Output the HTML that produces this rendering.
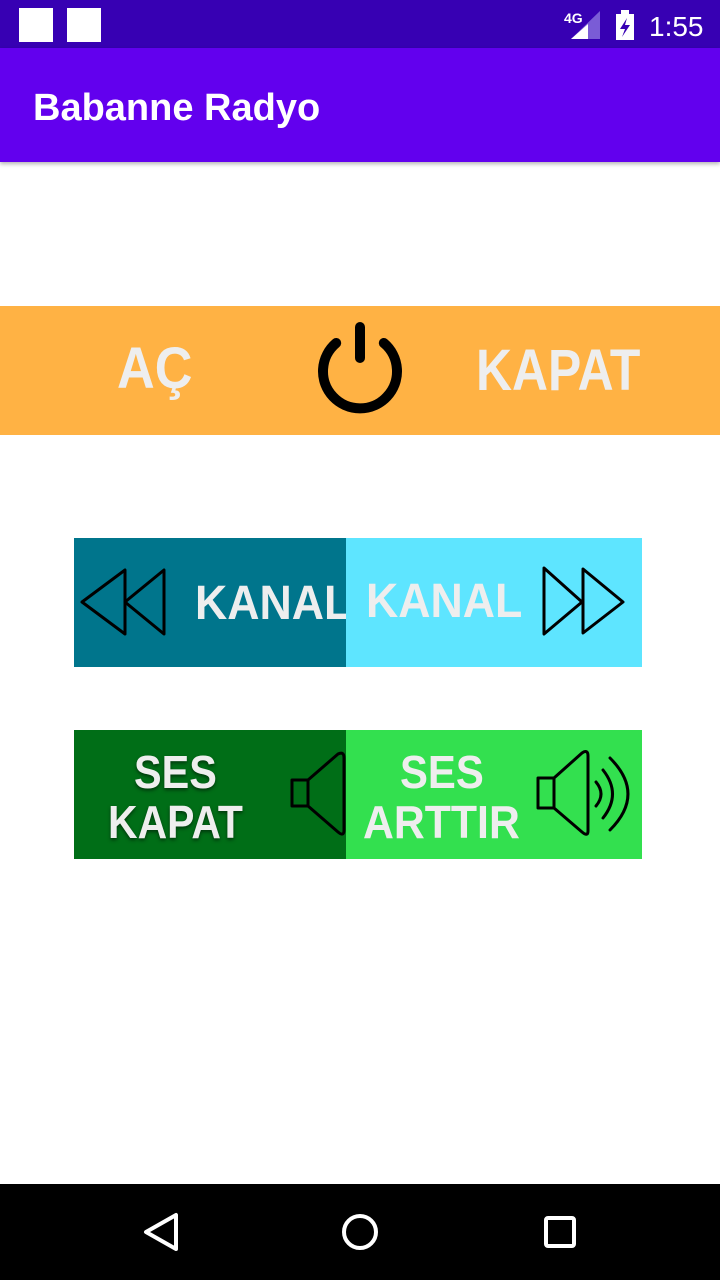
<!DOCTYPE html>
<html><head><meta charset="utf-8"><style>
html,body{margin:0;padding:0;width:720px;height:1280px;overflow:hidden;background:#fff;font-family:"Liberation Sans",sans-serif}
.abs{position:absolute}
.t{position:absolute;color:#eeeeee;font-weight:bold;font-family:"Liberation Sans",sans-serif;white-space:nowrap;transform-origin:0 0}
</style></head><body>
<div class="abs" style="left:0;top:0;width:720px;height:48px;background:#3700b3"></div>
<div class="abs" style="left:19px;top:8px;width:34px;height:34px;background:#fff"></div>
<div class="abs" style="left:67px;top:8px;width:34px;height:34px;background:#fff"></div>
<svg class="abs" style="left:560px;top:8px" width="160" height="34">
<text x="4" y="15" fill="#fff" font-size="14" font-weight="bold" font-family="Liberation Sans">4G</text>
<polygon points="11,31 40,31 40,3" fill="#7a5cd6"/>
<polygon points="11,31 28,31 28,16" fill="#fff"/>
<rect x="56" y="6" width="18" height="26" fill="#fff"/><rect x="61" y="2" width="8" height="5" fill="#fff"/>
<polygon points="67,10 60,21 65,21 62,29 70,17 65,17" fill="#3700b3"/>
<text x="89" y="28" fill="#fff" font-size="28" font-family="Liberation Sans">1:55</text>
</svg>
<div class="abs" style="left:0;top:48px;width:720px;height:114px;background:#6200ee;box-shadow:0 2px 4px rgba(0,0,0,.3)"></div>
<div class="abs" style="left:33px;top:86px;color:#fff;font-size:38px;font-weight:bold;font-family:'Liberation Sans',sans-serif;line-height:44px">Babanne Radyo</div>

<div class="abs" style="left:0;top:306px;width:720px;height:129px;background:#ffb244"></div>
<div class="t" style="left:117px;top:340px;font-size:58px;line-height:58px;transform:scaleX(0.9)">AÇ</div>
<div class="t" style="left:476px;top:342px;font-size:58px;line-height:58px;transform:scaleX(0.86)">KAPAT</div>
<svg class="abs" style="left:310px;top:318px" width="100" height="100">
<path d="M26.2,25 A37,37 0 1 0 73.8,25" fill="none" stroke="#000" stroke-width="10" stroke-linecap="round"/>
<line x1="50" y1="9" x2="50" y2="40" stroke="#000" stroke-width="10" stroke-linecap="round"/>
</svg>

<div class="abs" style="left:74px;top:538px;width:272px;height:129px;background:#00758c"></div>
<div class="abs" style="left:346px;top:538px;width:296px;height:129px;background:#5ee5ff"></div>
<div class="abs" style="left:195px;top:570px;width:151px;height:70px;overflow:hidden">
<div class="t" style="left:0;top:10px;font-size:48px;line-height:48px;transform:scaleX(0.93)">KANAL</div></div>
<div class="t" style="left:366px;top:578px;font-size:48px;line-height:48px;transform:scaleX(0.93)">KANAL</div>
<svg class="abs" style="left:74px;top:538px" width="568" height="129">
<path d="M8,64 L51,32 L51,96 Z M51,64 L90,32 L90,96 Z" fill="none" stroke="#000" stroke-width="3" stroke-linejoin="round"/>
<path d="M470,30 L508,64 L470,96 Z M509,31 L549,64 L509,95 Z" fill="none" stroke="#000" stroke-width="3" stroke-linejoin="round"/>
</svg>

<div class="abs" style="left:74px;top:730px;width:272px;height:129px;background:#006e17"></div>
<div class="abs" style="left:346px;top:730px;width:296px;height:129px;background:#33e04f"></div>
<div class="t" style="left:134px;top:749px;font-size:46px;line-height:46px;transform:scaleX(0.9);text-shadow:0 2px 4px rgba(0,0,0,.5)">SES</div>
<div class="t" style="left:108px;top:799px;font-size:46px;line-height:46px;transform:scaleX(0.89);text-shadow:0 2px 4px rgba(0,0,0,.5)">KAPAT</div>
<div class="t" style="left:400px;top:749px;font-size:46px;line-height:46px;transform:scaleX(0.91)">SES</div>
<div class="t" style="left:363px;top:799px;font-size:46px;line-height:46px;transform:scaleX(0.93)">ARTTIR</div>
<svg class="abs" style="left:74px;top:730px" width="568" height="129">
<path d="M218,50 L234,50 L264,24 Q270,21 270,28 L270,100 Q270,107 264,102 L234,76 L218,76 Z M234,50 L234,76" fill="none" stroke="#000" stroke-width="3" stroke-linejoin="round"/>
<path d="M464,48 L480,48 L508,23 Q514,19 514,26 L514,101 Q514,107 508,102 L480,78 L464,78 Z M480,48 L480,78" fill="none" stroke="#000" stroke-width="3" stroke-linejoin="round"/>
<path d="M522,52 Q532,64 522,76" fill="none" stroke="#000" stroke-width="3" stroke-linecap="round"/>
<path d="M529,40 Q548,64 529,88" fill="none" stroke="#000" stroke-width="3" stroke-linecap="round"/>
<path d="M536,28 Q572,64 536,100" fill="none" stroke="#000" stroke-width="3" stroke-linecap="round"/>
</svg>

<div class="abs" style="left:0;top:1184px;width:720px;height:96px;background:#000"></div>
<svg class="abs" style="left:0;top:1184px" width="720" height="96">
<path d="M176,31 L176,65 L146,48 Z" fill="none" stroke="#fff" stroke-width="4" stroke-linejoin="round"/>
<circle cx="360" cy="48" r="16" fill="none" stroke="#fff" stroke-width="4"/>
<rect x="546" y="34" width="28" height="28" rx="2" fill="none" stroke="#fff" stroke-width="4"/>
</svg>
</body></html>
